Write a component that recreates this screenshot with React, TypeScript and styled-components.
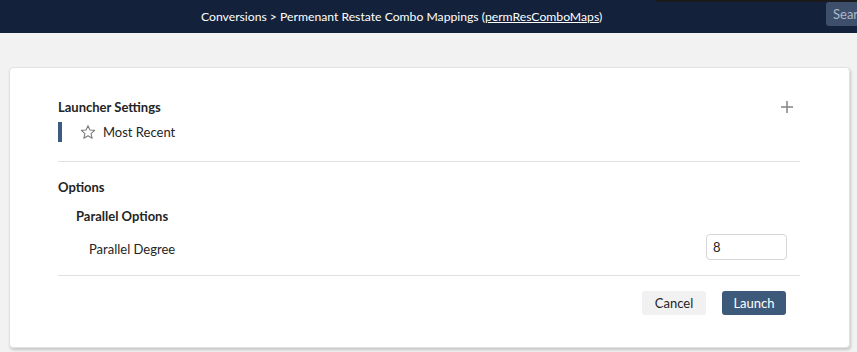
import React from 'react';
import styled, { createGlobalStyle } from 'styled-components';

const GlobalStyle = createGlobalStyle`
  html, body {
    margin: 0;
    padding: 0;
    background: #f2f2f2;
    font-family: Lato, "Open Sans", sans-serif;
    color: #242424;
  }
  * { box-sizing: border-box; }
`;

const Page = styled.div`
  display: flex;
  flex-direction: column;
  width: 857px;
  height: 352px;
  overflow: hidden;
`;

const Header = styled.header`
  position: relative;
  display: flex;
  align-items: center;
  height: 33px;
  padding-left: 201px;
  background: #13223a;
`;

const HeaderShadow = styled.div`
  position: absolute;
  top: 0;
  left: 655px;
  right: 0;
  height: 2px;
  background: #1b1b1e;
`;

const Crumbs = styled.div`
  flex: 1;
  font-size: 12.2px;
  color: #ffffff;
  white-space: nowrap;

  a {
    color: #ffffff;
    text-decoration: underline;
  }
`;

const SearchButton = styled.button`
  align-self: flex-start;
  margin-top: 2px;
  width: 40px;
  height: 24px;
  margin-right: -9px;
  padding: 0 0 0 7px;
  border: none;
  border-radius: 3px 0 0 3px;
  background: #3e4f6b;
  color: #aeb8c8;
  font-family: inherit;
  font-size: 13px;
  text-align: left;
  overflow: hidden;
  white-space: nowrap;
`;

const Body = styled.main`
  flex: 1;
  padding: 34px 7px 4px 9px;
`;

const Card = styled.section`
  display: flex;
  flex-direction: column;
  height: 281px;
  padding: 31px 49px 0 48px;
  background: #ffffff;
  border: 1px solid #e2e2e2;
  border-radius: 4px;
  box-shadow: 1px 2px 3px rgba(0, 0, 0, 0.18);
`;

const SectionHead = styled.div<{ $top?: number }>`
  display: flex;
  align-items: center;
  justify-content: space-between;
  margin-top: ${({ $top }) => $top ?? 0}px;
`;

const Title = styled.h3<{ $indent?: number }>`
  margin: 0;
  padding-left: ${({ $indent }) => $indent ?? 0}px;
  font-size: 13px;
  font-weight: 700;
  color: #242424;
`;

const AddButton = styled.button`
  display: flex;
  padding: 0;
  margin-right: 6px;
  border: none;
  background: none;
  color: #8a8a8a;
`;

const RecentItem = styled.div`
  display: flex;
  align-items: center;
  gap: 7px;
  height: 20px;
  margin-top: 7px;
  padding-left: 18px;
  border-left: 4px solid #3d5a80;
  font-size: 13px;
`;

const Divider = styled.hr<{ $top: number }>`
  margin: ${({ $top }) => $top}px 0 0;
  border: none;
  border-top: 1px solid #e0e0e0;
`;

const OptionRow = styled.div`
  display: flex;
  align-items: center;
  justify-content: space-between;
  margin-top: 10px;
  padding-left: 31px;
  font-size: 13px;
`;

const OptionLabel = styled.span`
  padding-top: 3px;
`;

const NumberInput = styled.input`
  width: 81px;
  height: 26px;
  margin-right: 13px;
  padding: 0 6px;
  border: 1px solid #d6d6d6;
  border-radius: 4px;
  font-family: inherit;
  font-size: 13px;
  color: #242424;
`;

const Actions = styled.div`
  display: flex;
  justify-content: flex-end;
  gap: 16px;
  margin-top: 15px;
  padding-right: 14px;
`;

const Button = styled.button<{ $primary?: boolean }>`
  width: 64px;
  height: 24px;
  border: none;
  border-radius: 3px;
  background: ${({ $primary }) => ($primary ? '#3d5a7b' : '#f1f1f1')};
  color: ${({ $primary }) => ($primary ? '#ffffff' : '#242424')};
  font-family: inherit;
  font-size: 13px;
`;

const Star = () => (
  <svg width="16" height="16" viewBox="0 0 24 24" fill="none" stroke="#7a7a7a" strokeWidth="1.6" strokeLinejoin="round">
    <polygon points="12,2.5 14.9,9 22,9.6 16.6,14.3 18.2,21.3 12,17.6 5.8,21.3 7.4,14.3 2,9.6 9.1,9" />
  </svg>
);

const Plus = () => (
  <svg width="14" height="14" viewBox="0 0 14 14" stroke="currentColor" strokeWidth="1.6">
    <line x1="7" y1="1" x2="7" y2="13" />
    <line x1="1" y1="7" x2="13" y2="7" />
  </svg>
);

export default function App() {
  return (
    <Page>
      <GlobalStyle />
      <Header>
        <HeaderShadow />
        <Crumbs>
          Conversions &gt; Permenant Restate Combo Mappings (<a href="#">permResComboMaps</a>)
        </Crumbs>
        <SearchButton>Search</SearchButton>
      </Header>
      <Body>
        <Card>
          <SectionHead>
            <Title>Launcher Settings</Title>
            <AddButton aria-label="Add">
              <Plus />
            </AddButton>
          </SectionHead>
          <RecentItem>
            <Star />
            Most Recent
          </RecentItem>
          <Divider $top={19} />
          <SectionHead $top={17}>
            <Title>Options</Title>
          </SectionHead>
          <SectionHead $top={13}>
            <Title $indent={18}>Parallel Options</Title>
          </SectionHead>
          <OptionRow>
            <OptionLabel>Parallel Degree</OptionLabel>
            <NumberInput defaultValue="8" />
          </OptionRow>
          <Divider $top={15} />
          <Actions>
            <Button>Cancel</Button>
            <Button $primary>Launch</Button>
          </Actions>
        </Card>
      </Body>
    </Page>
  );
}
